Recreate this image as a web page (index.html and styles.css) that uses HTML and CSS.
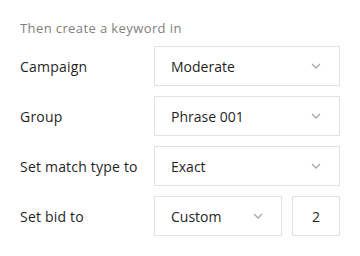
FILE: index.html
```html
<html lang="en">
<head>
  <meta charset="UTF-8" />
  <meta name="viewport" content="width=device-width, initial-scale=1.0" />
  <title>Create keyword</title>
  <link rel="stylesheet" href="styles.css">
</head>
<body>
  <div class="panel">
    <div class="intro">Then create a keyword in</div>

    <div class="form">
      <div class="row">
        <div class="label">Campaign</div>
        <div class="select">
          <span>Moderate</span>
          <svg class="chevron" viewBox="0 0 10 6"><path d="M1 1l4 4 4-4"/></svg>
        </div>
      </div>

      <div class="row">
        <div class="label">Group</div>
        <div class="select">
          <span>Phrase 001</span>
          <svg class="chevron" viewBox="0 0 10 6"><path d="M1 1l4 4 4-4"/></svg>
        </div>
      </div>

      <div class="row">
        <div class="label">Set match type to</div>
        <div class="select">
          <span>Exact</span>
          <svg class="chevron" viewBox="0 0 10 6"><path d="M1 1l4 4 4-4"/></svg>
        </div>
      </div>

      <div class="row">
        <div class="label">Set bid to</div>
        <div class="bid">
          <div class="select">
            <span>Custom</span>
            <svg class="chevron" viewBox="0 0 10 6"><path d="M1 1l4 4 4-4"/></svg>
          </div>
          <div class="amount">2</div>
        </div>
      </div>
    </div>
  </div>
</body>
</html>
```

FILE: styles.css
```css
:root {
  --text: #1f1f1f;
  --muted: #808080;
  --border: #e2e2e2;
  --chevron: #a8a8a8;
}

body {
  margin: 0;
  font-family: 'Open Sans', sans-serif;
  background: #fff;
  color: var(--text);
}

.panel {
  padding: 19px 20px 20px 20px;
}

.intro {
  font-size: 13px;
  line-height: 18px;
  letter-spacing: 0.4px;
  color: var(--muted);
  margin-bottom: 9px;
}

.form {
  display: flex;
  flex-direction: column;
  gap: 10px;
}

.row {
  display: grid;
  grid-template-columns: 134px 186px;
  align-items: center;
}

.label {
  font-size: 14px;
  letter-spacing: 0.2px;
}

.select,
.amount {
  height: 40px;
  box-sizing: border-box;
  border: 1px solid var(--border);
  font-size: 14px;
  display: flex;
  align-items: center;
}

.select {
  justify-content: space-between;
  padding: 0 18px 0 16px;
}

.chevron {
  width: 10px;
  height: 6px;
  fill: none;
  stroke: var(--chevron);
  stroke-width: 1.3;
}

.bid {
  display: grid;
  grid-template-columns: 128px 48px;
  gap: 10px;
}

.amount {
  justify-content: center;
}
```
